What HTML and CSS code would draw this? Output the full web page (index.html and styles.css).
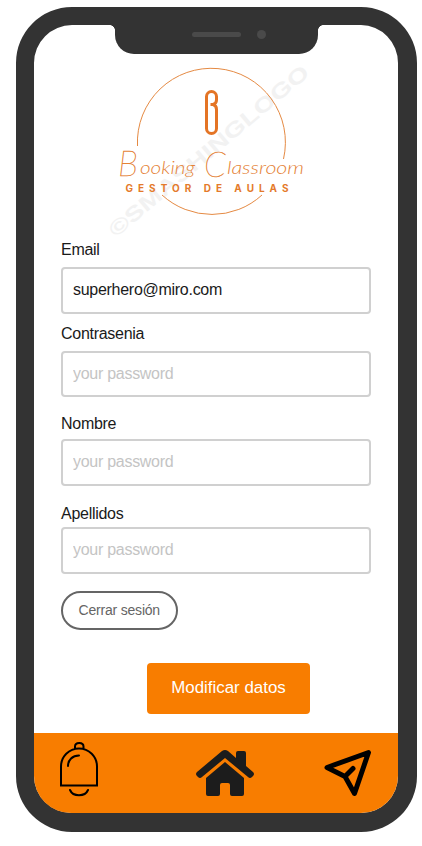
FILE: index.html
```html
<!DOCTYPE html>
<html lang="es">
<head>
<meta charset="utf-8">
<title>Booking Classroom</title>
<link rel="stylesheet" href="styles.css">
</head>
<body>
<div class="phone">
  <div class="notch"><span class="speaker"></span><span class="camera"></span></div>
  <svg class="logo" viewBox="34 25 364 215">
    <text class="watermark" transform="translate(116 238) rotate(-40)" textLength="254" lengthAdjust="spacingAndGlyphs">©SMASHINGLOGO</text>
    <path class="ring" d="M137.500 146A74 74 0 1 1 283.500 159M162 195A74 74 0 0 0 262 195"/>
    <path class="mark" d="M210.500 104.500H213Q216.500 103.500 216.500 100V96.500A5 5 0 0 0 206.500 96.500V128.500A5 5 0 0 0 216.500 128.500V109.500Q216.500 105.500 213 104.500"/>
    <text class="script cap" x="118" y="176" textLength="20" lengthAdjust="spacingAndGlyphs">B</text>
    <text class="script" x="140" y="174" textLength="55" lengthAdjust="spacingAndGlyphs">ooking</text>
    <text class="script cap" x="204" y="177" textLength="22" lengthAdjust="spacingAndGlyphs">C</text>
    <text class="script" x="227" y="174" textLength="77" lengthAdjust="spacingAndGlyphs">lassroom</text>
    <text class="tagline" x="125.500" y="191.500" textLength="163">GESTOR DE AULAS</text>
  </svg>
  <form class="form">
    <label for="email">Email</label>
    <input id="email" type="text" value="superhero@miro.com">
    <label class="second" for="pass">Contrasenia</label>
    <input id="pass" type="text" placeholder="your password">
    <label class="third" for="name">Nombre</label>
    <input id="name" type="text" placeholder="your password">
    <label class="fourth" for="surname">Apellidos</label>
    <input id="surname" type="text" placeholder="your password">
    <button class="logout" type="button">Cerrar sesión</button>
    <button class="save" type="button">Modificar datos</button>
  </form>
  <nav class="nav">
    <svg class="bell" viewBox="0 0 40 56"><path d="M2 44.500V25.500A18 18 0 0 1 38 25.500V44.500ZM16 7.500V5.500C16 .8 24.500 .8 24.500 5.500V7.500M9 25C9 19 13.500 14.500 20 14.500M11 49C14 56 26 56 29 49"/></svg>
    <svg class="home" viewBox="0 0 58 46"><path d="M42 1h6q2 0 2 2v13l7 6q2 2 0 4l-1 1q-2 2-4 0L29 8 6 27q-2 2-4 0l-1-1q-2-2 0-4L26 1q3-2 6 0l8 7V3q0-2 2-2ZM29 12 48 28V44q0 2-2 2H36q-2 0-2-2V35q0-2-2-2H26q-2 0-2 2v9q0 2-2 2H12q-2 0-2-2V28Z"/></svg>
    <svg class="send" viewBox="0 0 48 48"><path d="M3 18.500 44.500 3.500 30.500 44.500 21 27.500ZM21 27.500 29 19.500"/></svg>
  </nav>
</div>
</body>
</html>
```
FILE: styles.css
```css
* { box-sizing: border-box; }
body {
  margin: 0;
  background: #fff;
  font-family: "Liberation Sans", Arial, sans-serif;
  overflow: hidden;
}
.phone {
  position: relative;
  display: flex;
  flex-direction: column;
  width: 401px;
  height: 825px;
  margin: 7px 0 0 16px;
  border: solid #333;
  border-width: 18px 19px 19px 18px;
  border-radius: 56px;
  background: #fff;
}
.notch {
  position: absolute;
  top: -1px;
  left: 81px;
  width: 203px;
  height: 30px;
  border-radius: 0 0 19px 19px;
  background: #333;
}
.notch::before, .notch::after {
  content: "";
  position: absolute;
  top: 1px;
  width: 5px;
  height: 5px;
}
.notch::before { left: -5px; background: radial-gradient(circle at 0 100%, transparent 4.5px, #333 5px); }
.notch::after { right: -5px; background: radial-gradient(circle at 100% 100%, transparent 4.5px, #333 5px); }
.speaker, .camera { position: absolute; background: #4a4a4a; }
.speaker { left: 77px; top: 8px; width: 49px; height: 5px; border-radius: 3px; }
.camera { left: 142px; top: 6px; width: 9px; height: 9px; border-radius: 50%; }
.logo { display: block; width: 364px; height: 215px; flex: none; }
.watermark { font: bold 21px "Liberation Sans", sans-serif; fill: #f2f2f2; }
.ring { fill: none; stroke: #e58a43; stroke-width: 1; }
.mark { fill: none; stroke: #e47425; stroke-width: 3; stroke-linejoin: round; }
.script { font: italic 300 18px Lato, sans-serif; fill: #e58236; }
.cap { font-size: 36px; font-weight: 100; stroke: #e58236; stroke-width: 0.4; }
.tagline { font: 700 10px Inter, sans-serif; fill: #e47a2b; }
.form {
  display: flex;
  flex-direction: column;
  align-items: flex-start;
  height: 493px;
  padding: 0 27px;
}
label { font-size: 16px; letter-spacing: -0.28px; line-height: 20px; height: 20px; color: #1a1a1a; }
input {
  width: 310px;
  height: 46.5px;
  margin: 7px 0 0;
  padding: 0 10px;
  border: 2px solid #d0d0d0;
  border-radius: 4px;
  background: #fff;
  font: 16px "Liberation Sans", sans-serif;
  letter-spacing: -0.28px;
  color: #1a1a1a;
}
input::placeholder { color: #c4c4c4; opacity: 1; }
.second { margin-top: 10px; }
.third { margin-top: 17px; }
.third + input { margin-top: 5px; }
.fourth { margin-top: 18px; }
.fourth + input { margin-top: 3.5px; }
button { padding: 0; font-family: inherit; }
.logout {
  width: 116.5px;
  height: 39px;
  margin-top: 17px;
  border: 2px solid #656565;
  border-radius: 20px;
  background: #fff;
  color: #656565;
  font-size: 14px;
  letter-spacing: -0.2px;
}
.save {
  width: 163px;
  height: 51px;
  margin: 33px 0 0 86px;
  border: 0;
  border-radius: 4px;
  background: #f87d00;
  color: #fff;
  font-size: 16.9px;
}
.nav {
  display: flex;
  justify-content: space-between;
  align-items: flex-start;
  height: 80px;
  padding: 8px 26px 0 25px;
  border-radius: 0 0 37px 37px;
  background: #f87d00;
}
.nav svg { display: block; flex: none; }
.bell { width: 40px; height: 56px; fill: none; stroke: #000; stroke-width: 2; stroke-linecap: round; }
.home { width: 58px; height: 46px; margin: 9px 0 0 26px; fill: #1c1c1c; }
.send { width: 48px; height: 48px; margin-top: 8px; fill: none; stroke: #000; stroke-width: 5; stroke-linecap: round; stroke-linejoin: round; }
```
